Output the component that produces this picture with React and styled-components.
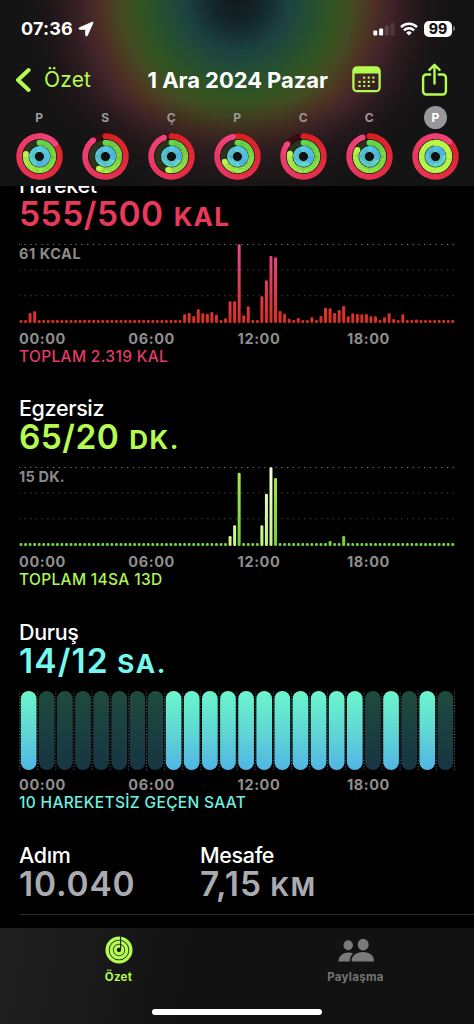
import React from "react";
import styled, { createGlobalStyle } from "styled-components";

const GlobalStyle = createGlobalStyle`
  * {
    box-sizing: border-box;
  }

  body {
    margin: 0;
    background: #000;
    font-family: Inter, "Liberation Sans", sans-serif;
  }

  svg {
    display: block;
    flex: none;
  }
`;

const Screen = styled.div`
  display: flex;
  flex-direction: column;
  width: 474px;
  height: 1024px;
  overflow: hidden;
  background: #000;
  color: #fff;
`;

const Header = styled.header`
  flex: none;
  height: 186px;
  background:
    linear-gradient(rgba(20, 20, 20, 0) 100px, rgba(20, 20, 20, 0.45) 150px),
    radial-gradient(
      circle at 237px 0,
      #10191c 0,
      #13262b 25px,
      #1c4241 52px,
      #26502f 78px,
      #325420 98px,
      #454a22 116px,
      #4e3023 136px,
      #43252a 150px,
      #2c1b1f 170px,
      #1b1517 192px,
      rgba(20, 20, 20, 0) 215px
    ),
    #141414;
`;

const StatusBar = styled.div`
  display: flex;
  align-items: center;
  height: 57px;
  padding: 0 19px 0 21px;
`;

const Time = styled.div`
  font-size: 18px;
  font-weight: 700;
  line-height: 20px;
  letter-spacing: 0.2px;
  margin-right: 5px;
`;

const StatusIcons = styled.div`
  display: flex;
  align-items: center;
  margin-left: auto;
`;

const Battery = styled.div`
  width: 28px;
  height: 16px;
  margin-left: 6px;
  border-radius: 5px;
  background: #fff;
  color: #141414;
  font-size: 14px;
  font-weight: 800;
  line-height: 16px;
  text-align: center;
`;

const BatteryTip = styled.div`
  width: 2px;
  height: 5px;
  margin-left: 1px;
  border-radius: 0 2px 2px 0;
  background: #777;
`;

const NavBar = styled.div`
  display: flex;
  align-items: center;
  height: 45px;
  padding: 0 26px 0 15px;
  color: #b4fa50;
`;

const Back = styled.div`
  display: flex;
  align-items: center;
  gap: 13px;
  width: 133px;
  font-size: 21px;
  line-height: 26px;
  letter-spacing: 0.15px;
`;

const NavTitle = styled.div`
  width: 205px;
  color: #fff;
  font-size: 22px;
  font-weight: 700;
  line-height: 24px;
  letter-spacing: -0.05px;
  white-space: nowrap;
`;

const NavActions = styled.div`
  display: flex;
  align-items: center;
  gap: 40px;
`;

const Week = styled.div`
  display: grid;
  grid-template-columns: repeat(7, 66.05px);
  padding: 4.2px 0 0 6px;
`;

const Day = styled.div`
  display: flex;
  flex-direction: column;
  align-items: center;
  gap: 4px;
`;

const DayLetter = styled.div`
  width: 23px;
  height: 23px;
  border-radius: 50%;
  background: ${(props) => (props.$selected ? "#98989c" : "transparent")};
  color: ${(props) => (props.$selected ? "#fff" : "#9b9896")};
  font-size: 12px;
  font-weight: 700;
  line-height: 24px;
  text-align: center;
`;

const Content = styled.main`
  flex: 1;
  min-height: 0;
  overflow: hidden;
  padding-left: 19px;
`;

const Scrolled = styled.div`
  margin-top: -12px;
`;

const Section = styled.section`
  height: 223.4px;
`;

const Title = styled.div`
  height: 22px;
  font-size: 21.5px;
  font-weight: 500;
  line-height: 23px;
  letter-spacing: -0.35px;
`;

const Value = styled.div`
  display: flex;
  align-items: baseline;
  gap: ${(props) => props.$gap || "10px"};
  height: 36px;
  color: ${(props) => props.$color};
  font-size: 33.5px;
  font-weight: 600;
  line-height: 36px;
  letter-spacing: ${(props) => props.$spacing || "0"};
  white-space: nowrap;
`;

const Unit = styled.span`
  font-size: 26px;
  font-weight: 700;
  letter-spacing: ${(props) => props.$spacing || "1.2px"};
`;

const ChartBox = styled.div`
  position: relative;
  height: 79px;
  margin: 12px 0 6.6px;
`;

const ChartMax = styled.div`
  position: absolute;
  top: 1px;
  left: 0;
  color: #8b8b8b;
  font-size: 14.5px;
  font-weight: 700;
  line-height: 18px;
  letter-spacing: ${(props) => props.$spacing || "0"};
`;

const Axis = styled.div`
  display: grid;
  grid-template-columns: repeat(4, 109.3px);
  color: #8e8e8e;
  font-size: 14.5px;
  font-weight: 700;
  line-height: 18px;
  letter-spacing: 0.6px;
`;

const Total = styled.div`
  color: ${(props) => props.$color};
  font-size: 15.5px;
  font-weight: 500;
  line-height: 18px;
  letter-spacing: 0.33px;
  white-space: nowrap;
`;

const Stats = styled.div`
  display: grid;
  grid-template-columns: 181px 1fr;
  height: 71px;
  border-bottom: 1px solid #2a2a2a;
`;

const TabBar = styled.nav`
  display: flex;
  flex-direction: column;
  flex: none;
  height: 96px;
  background: linear-gradient(100deg, #1f1f1f 0, #1a1a1a 90px, #121212 190px);
`;

const Tabs = styled.div`
  display: grid;
  grid-template-columns: 1fr 1fr;
  height: 81px;
`;

const Tab = styled.div`
  display: flex;
  flex-direction: column;
  align-items: center;
  gap: 6px;
  padding-top: 8px;
  color: ${(props) => (props.$active ? "#b4fa50" : "#757575")};
  font-size: 11.5px;
  font-weight: 700;
  line-height: 14px;
  letter-spacing: 0.3px;
`;

const HomeIndicator = styled.div`
  width: 170px;
  height: 6px;
  margin: 0 auto;
  border-radius: 3px;
  background: #fff;
`;

const RED = ["#dc2020", "#f2447f"];
const GREEN = ["#62d84a", "#b8f84a"];
const BLUE = ["#72f2d4", "#4fb4e2"];

const WEEK = [
  { letter: "P", move: 1.14, exercise: 0.78, stand: 1.5 },
  { letter: "S", move: 0.895, exercise: 0.58, stand: 1.25 },
  { letter: "Ç", move: 0.94, exercise: 0.54, stand: 1.25 },
  { letter: "P", move: 0.965, exercise: 0.69, stand: 1.4 },
  { letter: "C", move: 0.855, exercise: 0.785, stand: 1.33 },
  { letter: "C", move: 0.945, exercise: 0.83, stand: 1.25 },
  { letter: "P", move: 1.12, exercise: 3.25, stand: 1.17, selected: true },
];

// quarter-hour bar heights in px, everything missing is an empty slot
const MOVE = {
  2: 10, 3: 11.7, 36: 8.7, 37: 10, 38: 7, 39: 13.7, 40: 9.7, 41: 9.3, 42: 11,
  43: 8.3, 45: 4.7, 46: 21.7, 47: 21.7, 48: 78.7, 49: 7.7, 50: 16.7, 53: 26.7,
  54: 42.7, 55: 67, 56: 65.7, 57: 12, 58: 9.3, 59: 4.3, 61: 5, 64: 5.7, 66: 7,
  67: 15.3, 68: 14.7, 69: 10, 70: 13, 71: 17, 72: 6.7, 73: 9.7, 74: 9, 75: 8.7,
  76: 9, 77: 6.7, 78: 6.7, 80: 5.7, 81: 9.7, 82: 4, 84: 8.7, 87: 3.6,
};

const EXERCISE = {
  46: 10, 47: 20.7, 48: 73.3, 53: 20.7, 54: 52.3, 55: 78.7, 56: 68, 68: 5, 71: 10,
};

const INTENSE = [46, 47, 53, 54, 55];
const STOOD = [0, 8, 9, 10, 11, 12, 13, 14, 15, 16, 17, 18, 20, 22];
const HOURS = ["00:00", "06:00", "12:00", "18:00"];

const mix = (from, to, t) => {
  const channel = (hex, n) => parseInt(hex.slice(1 + n * 2, 3 + n * 2), 16);
  const parts = [0, 1, 2].map((n) =>
    Math.round(channel(from, n) + (channel(to, n) - channel(from, n)) * t)
  );
  return `rgb(${parts.join(",")})`;
};

const point = (r, turn) => {
  const a = turn * Math.PI * 2;
  return [r * Math.sin(a), -r * Math.cos(a)];
};

const Ring = ({ r, progress, colors, track }) => {
  // after two laps the start colour is fully covered
  const start = progress > 2 ? colors[1] : colors[0];
  const shown = progress > 2 ? 1 + (progress % 1) : progress;
  const steps = 60;
  const [ex, ey] = point(r, shown);
  const arcs = [];
  for (let i = 0; i < steps; i++) {
    const [x1, y1] = point(r, (shown * i) / steps);
    const [x2, y2] = point(r, (shown * Math.min(i + 1.2, steps)) / steps);
    arcs.push(
      <path
        key={i}
        d={`M${x1} ${y1}A${r} ${r} 0 0 1 ${x2} ${y2}`}
        stroke={mix(start, colors[1], i / steps)}
      />
    );
  }
  return (
    <g fill="none" strokeWidth="5.7">
      <circle r={r} stroke={track} />
      <circle cx="0" cy={-r} r="2.85" fill={start} stroke="none" />
      {arcs}
      {shown > 1 && (
        <circle cx={ex} cy={ey} r="3.1" fill="rgba(0,0,0,0.2)" stroke="none" />
      )}
      <circle cx={ex} cy={ey} r="2.85" fill={colors[1]} stroke="none" />
    </g>
  );
};

const Rings = ({ day }) => (
  <svg width="47" height="47" viewBox="-23.5 -23.5 47 47">
    <circle r="23" fill="#111" />
    <Ring r={20.3} progress={day.move} colors={RED} track="#3a0d12" />
    <Ring r={13.8} progress={day.exercise} colors={GREEN} track="#2c331b" />
    <Ring r={7.5} progress={day.stand} colors={BLUE} track="#12333a" />
  </svg>
);

const BarChart = ({ id, data, top, bottom, special = [] }) => (
  <svg width="437" height="80" viewBox="0 0 437 80">
    <defs>
      <linearGradient id={id} gradientUnits="userSpaceOnUse" x1="0" y1="0" x2="0" y2="79">
        <stop offset="0" stopColor={top} />
        <stop offset="1" stopColor={bottom} />
      </linearGradient>
      <linearGradient id={`${id}-light`} gradientUnits="userSpaceOnUse" x1="0" y1="0" x2="0" y2="79">
        <stop offset="0" stopColor="#f2ffdc" />
        <stop offset="1" stopColor="#c4f47c" />
      </linearGradient>
    </defs>
    {[0.5, 26, 51.8].map((y, row) => (
      <path
        key={y}
        d={`M-0.4 ${y}H435.6`}
        stroke={row === 0 ? "#777" : "#4c4c4c"}
        strokeWidth="1.1"
        strokeDasharray="1.3 4.41"
      />
    ))}
    {Array.from({ length: 96 }, (_, i) => {
      const h = data[i] || 2.9;
      return (
        <rect
          key={i}
          x={2 + i * 4.545 - 1.5}
          y={79 - h}
          width="3"
          height={h}
          rx="1.3"
          fill={`url(#${id}${special.includes(i) ? "-light" : ""})`}
        />
      );
    })}
  </svg>
);

const StandChart = () => (
  <svg width="437" height="80" viewBox="0 0 437 80">
    <defs>
      <linearGradient id="stand-on" x1="0" y1="0" x2="0" y2="1">
        <stop offset="0" stopColor="#6bf6cc" />
        <stop offset="0.5" stopColor="#61d8d4" />
        <stop offset="1" stopColor="#50b5e4" />
      </linearGradient>
      <linearGradient id="stand-off" x1="0" y1="0" x2="0" y2="1">
        <stop offset="0" stopColor="#1e4a3e" />
        <stop offset="1" stopColor="#173543" />
      </linearGradient>
    </defs>
    {Array.from({ length: 25 }, (_, i) => (
      <path
        key={i}
        d={`M${0.6 + i * 18.12} -0.5V79`}
        stroke="#6c6c6c"
        strokeWidth="1"
        strokeDasharray="1 1.9"
      />
    ))}
    {Array.from({ length: 24 }, (_, i) => (
      <rect
        key={i}
        x={1.8 + i * 18.12}
        y="0"
        width="15.7"
        height="79"
        rx="7.8"
        fill={STOOD.includes(i) ? "url(#stand-on)" : "url(#stand-off)"}
      />
    ))}
  </svg>
);

const HourAxis = () => (
  <Axis>
    {HOURS.map((hour) => (
      <span key={hour}>{hour}</span>
    ))}
  </Axis>
);

const StatusRow = () => (
  <StatusBar>
    <Time>07:36</Time>
    <svg width="16" height="16" viewBox="0 0 16 16">
      <path
        d="M14.2 1.2 1.6 6.7c-.9.4-.7 1.6.3 1.6h5.4c.3 0 .4.1.4.4v5.4c0 1 1.2 1.2 1.6.3L14.9 2c.3-.6-.2-1.1-.7-.8z"
        fill="#fff"
        stroke="#fff"
        strokeWidth="0.9"
      />
    </svg>
    <StatusIcons>
      <svg width="22" height="14" viewBox="0 0 22 14">
        <rect x="0.3" y="8.6" width="4" height="4.8" rx="1.2" fill="#fff" />
        <rect x="6.1" y="6.4" width="4" height="7" rx="1.2" fill="#fff" />
        <rect x="11.8" y="3.5" width="4" height="9.9" rx="1.2" fill="#5d4348" />
        <rect x="17.4" y="0.8" width="4" height="12.6" rx="1.2" fill="#4c3a3e" />
      </svg>
      <WifiIcon />
      <Battery>99</Battery>
      <BatteryTip />
    </StatusIcons>
  </StatusBar>
);

const WifiIcon = () => (
  <svg width="23" height="14" viewBox="-5 0 23 14">
    <g fill="none" stroke="#fff" strokeWidth="2.5">
      <path d="M1 5.1a11.4 11.4 0 0 1 16 0" />
      <path d="M3.9 8.3a7.3 7.3 0 0 1 10.2 0" />
    </g>
    <path d="M9 13.6 6.2 10.7a4 4 0 0 1 5.6 0z" fill="#fff" />
  </svg>
);

const CalendarIcon = () => (
  <svg width="29" height="27" viewBox="0 0 29 27">
    <rect x="1.4" y="1.4" width="26.2" height="23.8" rx="3.8" fill="none" stroke="#b4fa50" strokeWidth="2.3" />
    <path d="M1 7.6V5a4 4 0 0 1 4-4h19a4 4 0 0 1 4 4v2.6z" fill="#b4fa50" />
    <g fill="#b4fa50">
      {[11.6, 15.8, 20].map((y, row) =>
        [7.6, 12.2, 16.8, 21.4]
          .filter((x, col) => !(row === 0 && col === 0) && !(row === 2 && col === 3))
          .map((x) => <rect key={`${x}-${y}`} x={x - 1.1} y={y - 1.1} width="2.2" height="2.2" rx="0.6" />)
      )}
    </g>
  </svg>
);

const ShareIcon = () => (
  <svg width="27" height="34" viewBox="0 0 27 34">
    <g fill="none" stroke="#b4fa50" strokeWidth="2.4" strokeLinecap="round" strokeLinejoin="round">
      <path d="M9.2 11.5H5.3a3.2 3.2 0 0 0-3.2 3.2v13.6a3.2 3.2 0 0 0 3.2 3.2h16.4a3.2 3.2 0 0 0 3.2-3.2V14.7a3.2 3.2 0 0 0-3.2-3.2h-3.9" />
      <path d="M13.5 20.5V2.4M8.4 6.9l5.1-5.1 5.1 5.1" />
    </g>
  </svg>
);

const ActivityIcon = () => (
  <svg width="28" height="28" viewBox="-14 -14 28 28">
    <g fill="none" stroke="#b4fa50" strokeWidth="3.3">
      <circle r="11.9" />
      <circle r="7.8" />
      <circle r="3.8" />
    </g>
    <path d="M1.6 -14V-0.5" stroke="#1a1d14" strokeWidth="1.1" />
  </svg>
);

const PeopleIcon = () => (
  <svg width="38" height="28" viewBox="0 0 38 28">
    <g fill="#7a7a7a">
      <ellipse cx="11.2" cy="9.3" rx="4.7" ry="5" />
      <path d="M1.4 25.4c0-4.9 4.4-9 9.8-9 1.800 0 3.500.4 4.900 1-2.200 1.700-3.400 4.100-3.300 8z" />
      <ellipse cx="26.2" cy="8.6" rx="5.5" ry="5.9" />
      <path d="M16 25.600c-1 0-1.500-.4-1.500-1.300 0-4.600 5-8.400 11.500-8.400s11 3.800 11 8.400c0 .9-.5 1.300-1.500 1.300z" />
    </g>
  </svg>
);

const App = () => {
  return (
    <Screen>
      <GlobalStyle />

      <Header>
        <StatusRow />
        <NavBar>
          <Back>
            <svg width="16" height="26" viewBox="0 0 16 26">
              <path d="M13.6 3 3 13l10.6 10" fill="none" stroke="#b4fa50" strokeWidth="4" strokeLinecap="round" strokeLinejoin="round" />
            </svg>
            Özet
          </Back>
          <NavTitle>1 Ara 2024 Pazar</NavTitle>
          <NavActions>
            <CalendarIcon />
            <ShareIcon />
          </NavActions>
        </NavBar>
        <Week>
          {WEEK.map((day, i) => (
            <Day key={i}>
              <DayLetter $selected={day.selected}>{day.letter}</DayLetter>
              <Rings day={day} />
            </Day>
          ))}
        </Week>
      </Header>

      <Content>
        <Scrolled>
          <Section>
            <Title>Hareket</Title>
            <Value $color="#e8395b" $spacing="0.5px">
              555/500 <Unit>KAL</Unit>
            </Value>
            <ChartBox>
              <BarChart id="move" data={MOVE} top="#e84a88" bottom="#d8301f" />
              <ChartMax $spacing="0.55px">61 KCAL</ChartMax>
            </ChartBox>
            <HourAxis />
            <Total $color="#e23c64">TOPLAM 2.319 KAL</Total>
          </Section>

          <Section>
            <Title>Egzersiz</Title>
            <Value $color="#b4fa50" $spacing="0.4px">
              65/20 <Unit $spacing="1.6px">DK.</Unit>
            </Value>
            <ChartBox>
              <BarChart id="exercise" data={EXERCISE} top="#aaec48" bottom="#6fd044" special={INTENSE} />
              <ChartMax $spacing="0.2px">15 DK.</ChartMax>
            </ChartBox>
            <HourAxis />
            <Total $color="#b0f45a">TOPLAM 14SA 13D</Total>
          </Section>

          <Section>
            <Title>Duruş</Title>
            <Value $color="#74f8f0" $spacing="1.1px" $gap="8.5px">
              14/12 <Unit $spacing="1.8px">SA.</Unit>
            </Value>
            <ChartBox>
              <StandChart />
            </ChartBox>
            <HourAxis />
            <Total $color="#6cf0e0">10 HAREKETSİZ GEÇEN SAAT</Total>
          </Section>

          <Stats>
            <div>
              <Title>Adım</Title>
              <Value $color="#a9abb0" $spacing="0.8px">10.040</Value>
            </div>
            <div>
              <Title>Mesafe</Title>
              <Value $color="#a9abb0" $spacing="1px" $gap="8.5px">
                7,15 <Unit $spacing="1.6px">KM</Unit>
              </Value>
            </div>
          </Stats>
        </Scrolled>
      </Content>

      <TabBar>
        <Tabs>
          <Tab $active>
            <ActivityIcon />
            Özet
          </Tab>
          <Tab>
            <PeopleIcon />
            Paylaşma
          </Tab>
        </Tabs>
        <HomeIndicator />
      </TabBar>
    </Screen>
  );
};

export default App;
